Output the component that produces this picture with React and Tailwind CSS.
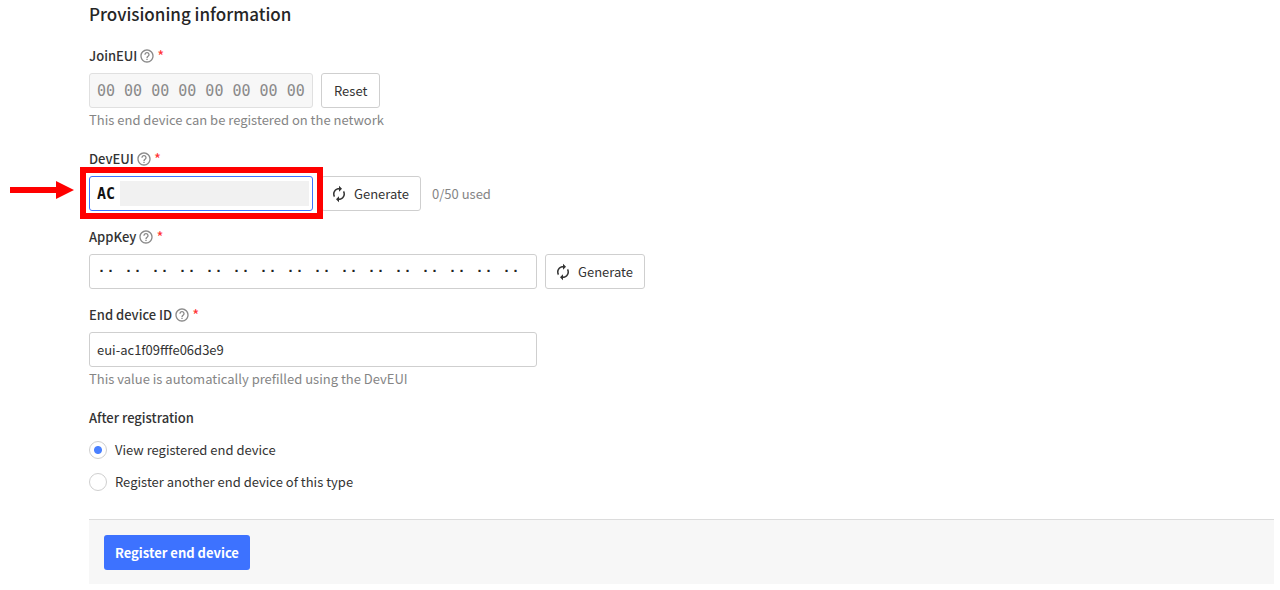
import { useState } from 'react';

const inputBase =
  'h-[35px] rounded-[3px] border px-[7px] outline-none';
const monoFont = "font-['DejaVu_Sans_Mono',monospace] text-[15px]";

function HelpIcon() {
  return (
    <svg viewBox="0 0 24 24" className="size-4 shrink-0 text-[#8a8a8a]" fill="currentColor" aria-hidden="true">
      <path d="M11 18h2v-2h-2v2zm1-16C6.48 2 2 6.48 2 12s4.48 10 10 10 10-4.48 10-10S17.52 2 12 2zm0 18c-4.41 0-8-3.59-8-8s3.59-8 8-8 8 3.59 8 8-3.59 8-8 8zm0-14c-2.21 0-4 1.79-4 4h2c0-1.1.9-2 2-2s2 .9 2 2c0 2-3 1.75-3 5h2c0-2.25 3-2.5 3-5 0-2.21-1.79-4-4-4z" />
    </svg>
  );
}

function RefreshIcon() {
  return (
    <svg viewBox="0 0 24 24" className="size-[18px] shrink-0 text-[#333]" fill="currentColor" aria-hidden="true">
      <path d="M12 6v3l4-4-4-4v3c-4.42 0-8 3.58-8 8 0 1.57.46 3.03 1.24 4.26L6.7 14.8c-.45-.83-.7-1.79-.7-2.8 0-3.31 2.69-6 6-6zm6.76 1.74L17.3 9.2c.44.84.7 1.79.7 2.8 0 3.31-2.69 6-6 6v-3l-4 4 4 4v-3c4.42 0 8-3.58 8-8 0-1.57-.46-3.03-1.24-4.26z" />
    </svg>
  );
}

function Field({ id, label, description, children }) {
  return (
    <div className="mb-4">
      <div className="mb-[7px] flex h-5 items-center">
        <label htmlFor={id} className="font-medium">{label}</label>
        <span className="ml-[2px] flex items-center">
          <HelpIcon />
        </span>
        <span className="ml-[2px] text-[15px] text-[#ff3333]">*</span>
      </div>
      <div className="flex items-center gap-2">{children}</div>
      {description && <p className="h-[25px] pt-[2px] text-[#858585]">{description}</p>}
    </div>
  );
}

function Button({ children, className }) {
  return (
    <button
      type="button"
      className={`flex h-[35px] items-center rounded-[3px] border border-[#cfcfcf] bg-white ${className}`}
    >
      {children}
    </button>
  );
}

function Radio({ value, selected, onSelect, children }) {
  return (
    <label className="flex h-8 items-center gap-2">
      <input
        type="radio"
        name="after-registration"
        value={value}
        checked={selected === value}
        onChange={() => onSelect(value)}
        className="size-[18px] appearance-none rounded-full border border-[#cfcfcf] bg-white checked:bg-[radial-gradient(circle,#4a80ff_3.5px,transparent_4.5px)]"
      />
      <span>{children}</span>
    </label>
  );
}

export default function App() {
  const [after, setAfter] = useState('view');
  const [devEui, setDevEui] = useState('AC');
  const [deviceId, setDeviceId] = useState('eui-ac1f09fffe06d3e9');

  return (
    <form
      onSubmit={(e) => e.preventDefault()}
      className="bg-white pt-[2px] pr-[6px] pb-[6px] pl-[89px] font-['Noto_Sans_CJK_SC',sans-serif] text-[13px] leading-5 text-[#333]"
    >
      <h3 className="mb-5 text-[17px] leading-6 font-medium text-[#262626]">Provisioning information</h3>

      <Field id="join-eui" label="JoinEUI" description="This end device can be registered on the network">
        <input
          id="join-eui"
          disabled
          value="00 00 00 00 00 00 00 00"
          className={`${inputBase} ${monoFont} w-56 border-[#e0e0e0] bg-[#f7f7f7] text-[#8a8a8a]`}
        />
        <Button className="px-3">Reset</Button>
      </Field>

      <Field id="dev-eui" label="DevEUI">
        <div className="relative">
          <input
            id="dev-eui"
            value={devEui}
            onChange={(e) => setDevEui(e.target.value)}
            className={`${inputBase} ${monoFont} w-56 border-[#3d72ff] bg-white font-bold text-[#111]`}
          />
          <div className="absolute inset-y-[5px] right-1 left-[31px] bg-[#f1f1f1]" />
          <div className="absolute -top-[9px] -right-[10px] -bottom-2 -left-[9px] border-6 border-[#ff0000]" />
          <svg viewBox="0 0 64 20" className="absolute top-1 right-full mr-[15px] h-5 w-16" aria-hidden="true">
            <path d="M0 7h46V1l18 9-18 9v-6H0z" fill="#ff0000" />
          </svg>
        </div>
        <Button className="gap-[6px] pr-[11px] pl-2">
          <RefreshIcon />
          Generate
        </Button>
        <span className="ml-[3px] text-[#858585]">0/50 used</span>
      </Field>

      <Field id="app-key" label="AppKey">
        <input
          id="app-key"
          readOnly
          value="·· ·· ·· ·· ·· ·· ·· ·· ·· ·· ·· ·· ·· ·· ·· ··"
          className={`${inputBase} w-[448px] border-[#cfcfcf] bg-white font-['Liberation_Mono',monospace] text-[15px] font-bold text-[#222]`}
        />
        <Button className="gap-[6px] pr-[11px] pl-2">
          <RefreshIcon />
          Generate
        </Button>
      </Field>

      <Field
        id="device-id"
        label="End device ID"
        description="This value is automatically prefilled using the DevEUI"
      >
        <input
          id="device-id"
          value={deviceId}
          onChange={(e) => setDeviceId(e.target.value)}
          className={`${inputBase} w-[448px] border-[#cfcfcf] bg-white`}
        />
      </Field>

      <fieldset>
        <legend className="mb-[6px] font-medium">After registration</legend>
        <Radio value="view" selected={after} onSelect={setAfter}>View registered end device</Radio>
        <Radio value="another" selected={after} onSelect={setAfter}>Register another end device of this type</Radio>
      </fieldset>

      <div className="mt-[21px] border-t border-[#dcdcdc] bg-[#f7f7f7] px-[15px] pt-[15px] pb-[14px]">
        <button type="submit" className="h-[35px] rounded-[3px] bg-[#3d72ff] px-[11px] font-bold text-white">
          Register end device
        </button>
      </div>
    </form>
  );
}
